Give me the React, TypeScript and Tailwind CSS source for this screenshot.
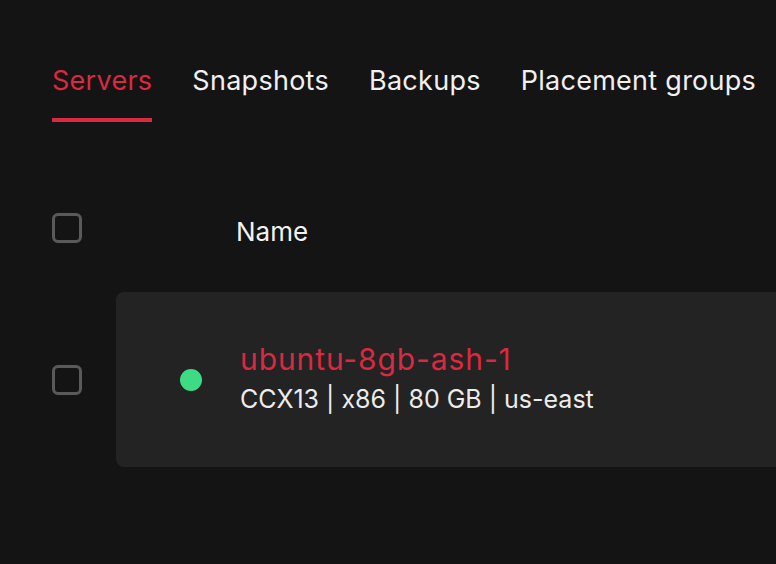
import React from "react";

const tabs = ["Servers", "Snapshots", "Backups", "Placement groups"];

function Checkbox() {
  return <div className="h-[30px] w-[30px] shrink-0 rounded-[6px] border-[3px] border-[#5a5a5a]" />;
}

export default function App() {
  return (
    <div
      className="h-[564px] w-[776px] overflow-hidden bg-[#141414] text-[#ececec]"
      style={{ fontFamily: "Inter, 'Noto Sans', sans-serif" }}
    >
      <nav className="flex gap-[40px] pl-[52px] pt-[59px]">
        {tabs.map((t, i) => (
          <div key={t} className="flex flex-col">
            <span
              className={`whitespace-nowrap text-[27px] leading-[44px] tracking-[0.01em] ${
                i === 0 ? "text-[#dc2840]" : "text-[#f0f0f0]"
              }`}
            >
              {t}
            </span>
            <div className={`mt-[15px] h-[4px] ${i === 0 ? "bg-[#dc2840]" : ""}`} />
          </div>
        ))}
      </nav>

      <div className="mt-[91px] flex h-[30px] items-start pl-[52px]">
        <Checkbox />
        <span className="ml-[154px] mt-[4px] text-[26px] leading-[30px] text-[#f2f2f2]">Name</span>
      </div>

      <div className="mt-[49px] flex items-center pl-[52px]">
        <Checkbox />
        <div className="ml-[34px] flex h-[175px] flex-1 items-center rounded-l-[8px] bg-[#232323] pl-[64px]">
          <div className="h-[22px] w-[22px] shrink-0 rounded-full bg-[#3ddc84]" />
          <div className="mb-[4px] ml-[38px] flex flex-col">
            <span className="whitespace-nowrap text-[30px] leading-[36px] tracking-[0.03em] text-[#dc2840]">
              ubuntu-8gb-ash-1
            </span>
            <span className="mt-[7px] whitespace-nowrap text-[25px] leading-[30px] text-[#ececec]">
              CCX13 | x86 | 80 GB | us-east
            </span>
          </div>
        </div>
      </div>
    </div>
  );
}
